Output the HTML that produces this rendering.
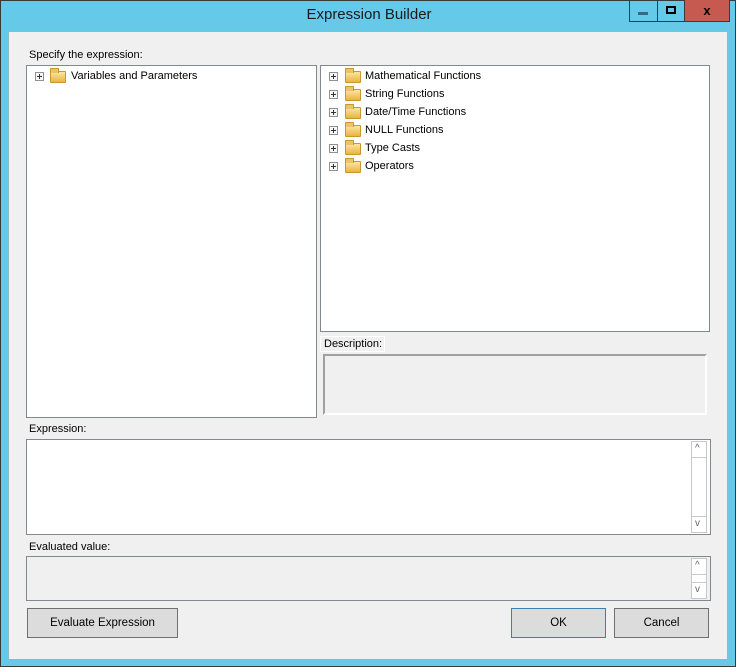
<!DOCTYPE html>
<html><head><style>
*{box-sizing:border-box;margin:0;padding:0}
body{width:736px;height:667px;overflow:hidden;font-family:"Liberation Sans",sans-serif;font-size:11px;color:#000}
.win{position:absolute;left:0;top:0;width:736px;height:667px;background:#65c9ea;border:1px solid #3a3a3a}
.a{position:absolute}
.client{left:7px;top:30px;width:720px;height:629px;background:#f0f0f0;border:1px solid #8fb8c8}
.box{position:absolute;background:#fff;border:1px solid #828790}
.plus{position:absolute;width:9px;height:9px;border:1px solid #919191;background:#f6f6f6}
.plus:before{content:"";position:absolute;left:1px;top:3px;width:5px;height:1px;background:#333}
.plus:after{content:"";position:absolute;left:3px;top:1px;width:1px;height:5px;background:#333}
.fold{position:absolute;width:16px;height:12px;background:linear-gradient(#fbe6a0,#e8b540);border:1px solid #c9982c;border-radius:1px}
.fold:before{content:"";position:absolute;left:-1px;top:-4px;width:7px;height:4px;background:#e9c56a;border:1px solid #c9982c;border-bottom:none;border-radius:1px 1px 0 0}
.t{position:absolute;white-space:nowrap;font-size:11px;line-height:14px}
.btn{position:absolute;background:#e1e1e1;border:1px solid #adadad;text-align:center;line-height:28px;font-size:11.5px}
.sb{position:absolute;width:16px;background:#fff;border:1px solid #c8c8c8}
</style></head><body>
<div class="win">
<div class="a" style="left:0;top:5px;width:736px;text-align:center;font-size:15px;color:#1a1a1a">Expression Builder</div>
<div class="a" style="left:628px;top:-1px;width:29px;height:22px;border:1px solid #3a3a3a;border-top:none"><div class="a" style="left:8px;top:12px;width:10px;height:3px;background:#2e6e84"></div></div>
<div class="a" style="left:656px;top:-1px;width:28px;height:22px;border:1px solid #3a3a3a;border-top:none"><div class="a" style="left:8px;top:6px;width:10px;height:8px;border:2px solid #000"></div></div>
<div class="a" style="left:683px;top:-1px;width:46px;height:22px;background:#c75a50;border:1px solid #3a3a3a;border-top:none;text-align:center;font-weight:bold;font-size:13px;line-height:22px">x</div>
<div class="a client"></div>
</div>
<div class="t" style="left:29px;top:48px">Specify the expression:</div>
<div class="box" style="left:26px;top:65px;width:291px;height:353px"></div>
<div class="plus" style="left:35px;top:72px"></div>
<div class="fold" style="left:50px;top:71px"></div>
<div class="t" style="left:71px;top:69px">Variables and Parameters</div>
<div class="box" style="left:320px;top:65px;width:390px;height:267px"></div>
<div class="plus" style="left:329px;top:72px"></div><div class="fold" style="left:345px;top:71px"></div><div class="t" style="left:365px;top:69px">Mathematical Functions</div>
<div class="plus" style="left:329px;top:90px"></div><div class="fold" style="left:345px;top:89px"></div><div class="t" style="left:365px;top:87px">String Functions</div>
<div class="plus" style="left:329px;top:108px"></div><div class="fold" style="left:345px;top:107px"></div><div class="t" style="left:365px;top:105px">Date/Time Functions</div>
<div class="plus" style="left:329px;top:126px"></div><div class="fold" style="left:345px;top:125px"></div><div class="t" style="left:365px;top:123px">NULL Functions</div>
<div class="plus" style="left:329px;top:144px"></div><div class="fold" style="left:345px;top:143px"></div><div class="t" style="left:365px;top:141px">Type Casts</div>
<div class="plus" style="left:329px;top:162px"></div><div class="fold" style="left:345px;top:161px"></div><div class="t" style="left:365px;top:159px">Operators</div>
<div class="a" style="left:320px;top:336px;width:65px;height:16px;border:1px solid #fff;background:#f0f0f0"></div>
<div class="t" style="left:324px;top:337px">Description:</div>
<div class="a" style="left:323px;top:354px;width:384px;height:61px;border:2px solid #a0a0a0;border-right-color:#fff;border-bottom-color:#fff;background:#f0f0f0"></div>
<div class="t" style="left:29px;top:422px">Expression:</div>
<div class="box" style="left:26px;top:439px;width:685px;height:96px"></div>
<div class="sb" style="left:691px;top:441px;height:92px"></div>
<div class="a" style="left:691px;top:457px;width:16px;height:1px;background:#c8c8c8"></div>
<div class="a" style="left:691px;top:516px;width:16px;height:1px;background:#c8c8c8"></div>
<div class="t" style="left:695px;top:442px;font-size:10px;color:#666">^</div>
<div class="t" style="left:695px;top:517px;font-size:10px;color:#666">v</div>
<div class="t" style="left:29px;top:540px">Evaluated value:</div>
<div class="box" style="left:26px;top:556px;width:685px;height:45px;background:#f0f0f0"></div>
<div class="sb" style="left:691px;top:558px;height:41px"></div>
<div class="a" style="left:691px;top:574px;width:16px;height:1px;background:#c8c8c8"></div>
<div class="a" style="left:691px;top:582px;width:16px;height:1px;background:#c8c8c8"></div>
<div class="t" style="left:695px;top:559px;font-size:10px;color:#666">^</div>
<div class="t" style="left:695px;top:583px;font-size:10px;color:#666">v</div>
<div class="btn" style="left:27px;top:608px;width:151px;height:30px;border-color:#707070;background:#dcdcdc">Evaluate Expression</div>
<div class="btn" style="left:511px;top:608px;width:95px;height:30px;border-color:#3c7fb1;background:#dcdcdc">OK</div>
<div class="btn" style="left:614px;top:608px;width:95px;height:30px;border-color:#707070;background:#dcdcdc">Cancel</div>
</body></html>
